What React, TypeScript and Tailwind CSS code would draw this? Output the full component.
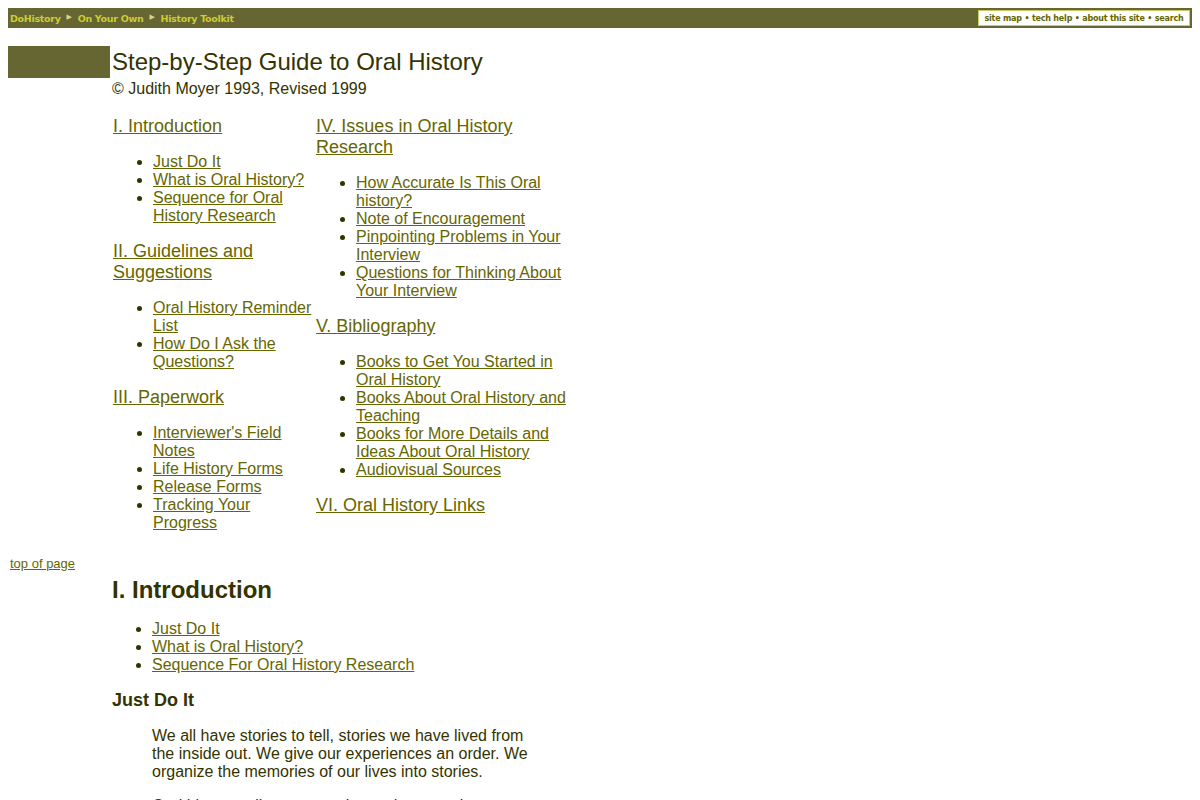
import React from 'react';

type Section = { title: string; items: string[] };

const leftSections: Section[] = [
  { title: 'I. Introduction', items: ['Just Do It', 'What is Oral History?', 'Sequence for Oral History Research'] },
  { title: 'II. Guidelines and Suggestions', items: ['Oral History Reminder List', 'How Do I Ask the Questions?'] },
  { title: 'III. Paperwork', items: ["Interviewer's Field Notes", 'Life History Forms', 'Release Forms', 'Tracking Your Progress'] },
];

const rightSections: Section[] = [
  {
    title: 'IV. Issues in Oral History Research',
    items: ['How Accurate Is This Oral history?', 'Note of Encouragement', 'Pinpointing Problems in Your Interview', 'Questions for Thinking About Your Interview'],
  },
  {
    title: 'V. Bibliography',
    items: ['Books to Get You Started in Oral History', 'Books About Oral History and Teaching', 'Books for More Details and Ideas About Oral History', 'Audiovisual Sources'],
  },
  { title: 'VI. Oral History Links', items: [] },
];

const link = 'text-[#666600] underline';

function TocColumn({ sections, width }: { sections: Section[]; width: string }) {
  return (
    <div className={`${width} px-px`}>
      {sections.map((s) => (
        <div key={s.title}>
          <a href="#" className={`${link} text-[18px]`}>{s.title}</a>
          {s.items.length > 0 && (
            <ul className="list-disc pl-10 my-4 text-[16px]">
              {s.items.map((it) => (
                <li key={it}><a href="#" className={link}>{it}</a></li>
              ))}
            </ul>
          )}
        </div>
      ))}
    </div>
  );
}

function Arrow() {
  return <span className="text-[#d6d68f] text-[7px] mx-[6px] relative -top-px">▶</span>;
}

export default function App() {
  return (
    <div className="min-h-screen bg-white p-2 font-['Liberation_Sans',Arial,sans-serif] leading-[normal] text-[#333300]">
      {/* top nav strip */}
      <div className="flex h-[20px] items-center justify-between bg-[#666633] pl-[2px] pr-[2px]">
        <div className="flex items-center whitespace-nowrap font-['DejaVu_Sans',sans-serif] text-[9.5px] font-bold tracking-[-0.3px] text-[#cccc33]">
          <span>DoHistory</span>
          <Arrow />
          <span>On Your Own</span>
          <Arrow />
          <span>History Toolkit</span>
        </div>
        <div className="flex h-[16px] w-[212px] items-center justify-center whitespace-nowrap border border-[#cccc66] bg-white font-['DejaVu_Sans',sans-serif] text-[8px] font-bold tracking-[-0.2px] text-[#666600]">
          site map • tech help • about this site • search
        </div>
      </div>

      <div className="mt-[18px] flex">
        <div className="w-[104px] shrink-0">
          <div className="h-[32px] w-[102px] bg-[#666633]" />
        </div>
        <div>
          <h1 className="mt-[2px] text-[24px] font-normal">Step-by-Step Guide to Oral History</h1>
          <p className="mt-[4px] text-[16px]">© Judith Moyer 1993, Revised 1999</p>
          <div className="mt-[18px] flex">
            <TocColumn sections={leftSections} width="w-[203px]" />
            <TocColumn sections={rightSections} width="w-[256px]" />
          </div>
        </div>
      </div>

      <div className="mt-[6px] px-[2px]">
        <a href="#" className={`${link} text-[13px]`}>top of page</a>
      </div>

      <div className="ml-[104px] mt-[4px] w-[470px]">
        <h2 className="text-[24px] font-bold">I. Introduction</h2>
        <ul className="list-disc pl-10 my-4 text-[16px]">
          <li><a href="#" className={link}>Just Do It</a></li>
          <li><a href="#" className={link}>What is Oral History?</a></li>
          <li><a href="#" className={link}>Sequence For Oral History Research</a></li>
        </ul>
        <h3 className="text-[18px] font-bold">Just Do It</h3>
        <div className="ml-10 mt-4 w-[392px] text-[16px]">
          <p>We all have stories to tell, stories we have lived from the inside out. We give our experiences an order. We organize the memories of our lives into stories.</p>
          <p className="mt-4">Oral history collects memories and personal commentaries of historical significance through recorded interviews.</p>
        </div>
      </div>
    </div>
  );
}
